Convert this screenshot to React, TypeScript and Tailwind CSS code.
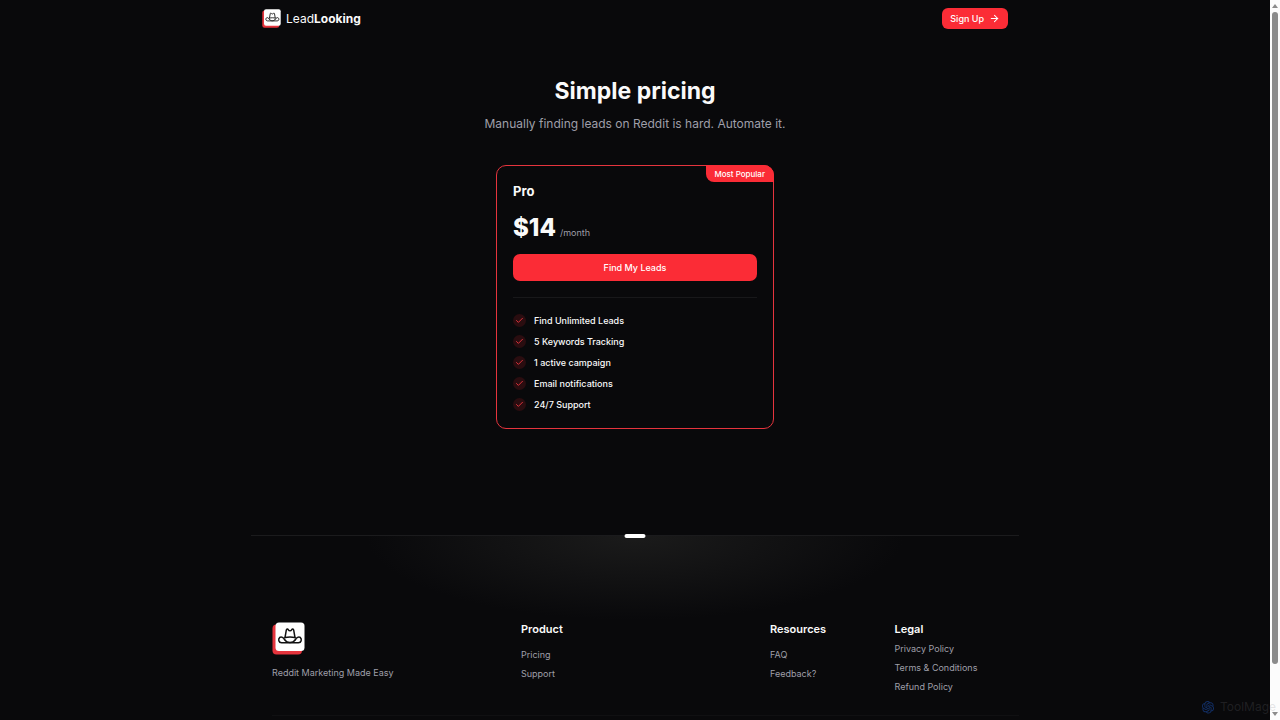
import { ArrowRight, Check } from "lucide-react";
import { AiOutlineOpenAI } from "react-icons/ai";

const features = [
  "Find Unlimited Leads",
  "5 Keywords Tracking",
  "1 active campaign",
  "Email notifications",
  "24/7 Support",
];

const footerColumns = [
  {
    title: "Product",
    className: "col-span-2",
    listClassName: "mt-2.5",
    links: ["Pricing", "Support"],
  },
  {
    title: "Resources",
    className: "col-span-1",
    listClassName: "mt-2.5",
    links: ["FAQ", "Feedback?"],
  },
  {
    title: "Legal",
    className: "col-span-1",
    listClassName: "mt-1",
    links: ["Privacy Policy", "Terms & Conditions", "Refund Policy"],
  },
];

function Logo({ className }: { className: string }) {
  return (
    <svg viewBox="0 0 33 33" fill="none" className={className} aria-hidden="true">
      <rect x="0.5" y="2.5" width="29.5" height="30" rx="4" fill="#e5343d" />
      <rect x="3.5" y="0.5" width="29" height="28.5" rx="3.5" fill="#fff" />
      <g stroke="#111" strokeWidth="1.5" strokeLinecap="round" strokeLinejoin="round">
        <path d="M13 15.6 14.3 8.2C14.6 6.6 15.8 6.8 16.4 7.8 17.1 9.1 18.9 9.1 19.6 7.8 20.2 6.8 21.4 6.6 21.7 8.2L23 15.6" />
        <path d="M12.6 17.6C11.6 15.8 9.4 14 7.8 15.4 5.8 17.2 6.6 20.7 9.6 20.7H26.4C29.4 20.7 30.2 17.2 28.2 15.4 26.6 14 24.4 15.8 23.4 17.6" />
        <path d="M13 15.6C16 15 20 15 23 15.6" />
        <path d="M12.6 17.6C14 19.6 16 20.5 18 20.5S22 19.6 23.4 17.6" />
      </g>
    </svg>
  );
}

function Header() {
  return (
    <header className="mx-auto flex h-[37px] w-full max-w-3xl items-center justify-between px-[11px]">
      <a href="#home" className="flex items-center gap-[5px] text-xs text-zinc-50">
        <Logo className="size-[19px]" />
        <span>
          Lead<b className="font-bold">Looking</b>
        </span>
      </a>
      <a
        href="#signup"
        className="flex h-[21px] items-center gap-[5px] rounded-md bg-[#fb2c36] px-2 text-[9px] font-medium text-white"
      >
        Sign Up
        <ArrowRight className="size-[11px]" strokeWidth={2.3} />
      </a>
    </header>
  );
}

function PricingCard() {
  return (
    <section className="relative mt-8 w-[278px] rounded-[10px] border border-[#e5343d] px-4 pt-[15px] pb-[17px]">
      <span className="absolute -top-px -right-px flex h-[17px] items-center rounded-tr-[10px] rounded-bl-lg bg-[#fb2c36] pr-[9px] pl-2 text-[8px] font-medium text-white">
        Most Popular
      </span>
      <h2 className="text-[13px] leading-5 font-bold">Pro</h2>
      <p className="mt-[11px] flex items-baseline gap-1">
        <span className="text-2xl font-extrabold">$14</span>
        <span className="text-[9px] text-zinc-400">/month</span>
      </p>
      <button
        type="button"
        className="mt-2.5 h-[27px] w-full rounded-[7px] bg-[#fb2c36] text-[9px] font-medium text-white"
      >
        Find My Leads
      </button>
      <hr className="mt-4 border-[#18181a]" />
      <ul className="mt-4 flex flex-col gap-2 text-[9px] leading-[13px] font-medium">
        {features.map((feature) => (
          <li key={feature} className="flex items-center gap-2">
            <span className="flex size-[13px] items-center justify-center rounded-full bg-[#2a0d10]">
              <Check className="size-[9px] text-[#e5343d]" strokeWidth={2.5} />
            </span>
            {feature}
          </li>
        ))}
      </ul>
    </section>
  );
}

function Footer() {
  return (
    <footer className="relative mx-auto mt-[106px] w-full max-w-3xl border-t border-[#1b1b1d] bg-[radial-gradient(35%_84px_at_50%_0%,#1b1b1b,transparent)]">
      <div className="absolute -top-0.5 left-1/2 h-1 w-[21px] -translate-x-1/2 rounded-full bg-white" />
      <div className="grid grid-cols-6 pt-[86px] pl-[21px]">
        <div className="col-span-2">
          <Logo className="size-[33px]" />
          <p className="mt-2.5 text-[9px] leading-[15px] text-zinc-400">Reddit Marketing Made Easy</p>
        </div>
        {footerColumns.map(({ title, className, listClassName, links }) => (
          <nav key={title} aria-label={title} className={className}>
            <h3 className="text-[11px] leading-[15px] font-semibold">{title}</h3>
            <ul className={`flex flex-col gap-1 text-[9px] leading-[15px] text-zinc-400 ${listClassName}`}>
              {links.map((link) => (
                <li key={link}>
                  <a href="#footer">{link}</a>
                </li>
              ))}
            </ul>
          </nav>
        ))}
      </div>
      <div className="mt-[21px] ml-[21px] h-8 border-t border-[#101012]" />
    </footer>
  );
}

function ScrollTrack() {
  return (
    <div className="flex w-2.5 shrink-0 flex-col items-center bg-[#fcfcfc] py-1" aria-hidden="true">
      <svg viewBox="0 0 6 4" className="h-1 w-1.5 shrink-0 fill-[#8b8b8b]">
        <path d="M3 0 6 4H0Z" />
      </svg>
      <div className="mt-1 mb-12 w-1.5 flex-1 rounded-full bg-[#8b8b8b]" />
      <svg viewBox="0 0 6 4" className="h-1 w-1.5 shrink-0 fill-[#8b8b8b]">
        <path d="M0 0H6L3 4Z" />
      </svg>
    </div>
  );
}

function Watermark() {
  return (
    <div className="absolute right-1 bottom-[5px] flex items-center gap-1">
      <AiOutlineOpenAI className="size-4 text-[#122e63]" aria-hidden="true" />
      <span className="text-xs leading-4 text-[#808088]/20">ToolMage</span>
    </div>
  );
}

export default function App() {
  return (
    <div className="relative flex h-screen overflow-hidden bg-[#09090b] font-['Inter',sans-serif] text-zinc-50">
      <div className="min-w-0 flex-1 overflow-hidden">
        <Header />
        <main className="flex flex-col items-center px-4 pt-[38px]">
          <h1 className="text-[23px] leading-8 font-bold">Simple pricing</h1>
          <p className="mt-2 text-xs leading-[18px] text-zinc-400">
            Manually finding leads on Reddit is hard. Automate it.
          </p>
          <PricingCard />
        </main>
        <Footer />
      </div>
      <ScrollTrack />
      <Watermark />
    </div>
  );
}
